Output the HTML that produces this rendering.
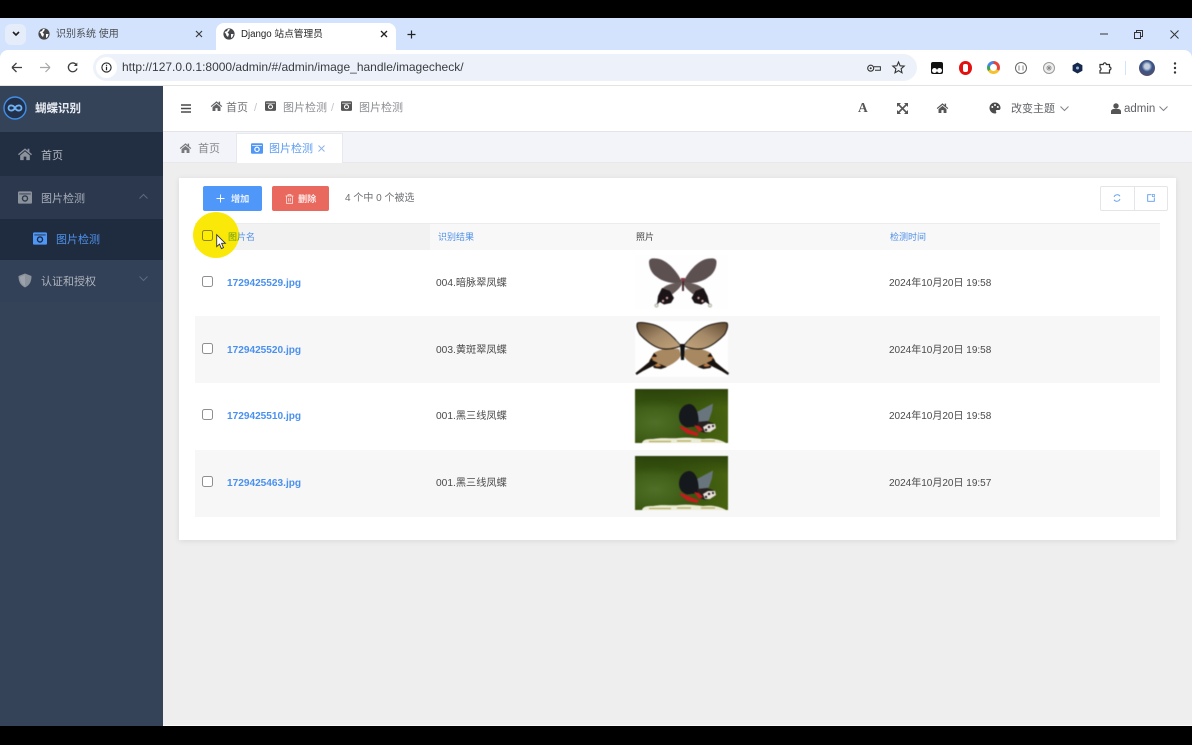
<!DOCTYPE html>
<html lang="zh"><head><meta charset="utf-8"><title>Django 站点管理员</title>
<style>
*{box-sizing:border-box}
html,body{margin:0;padding:0;width:1192px;height:745px;overflow:hidden;background:#000;font-family:"Liberation Sans","Noto Sans CJK SC",sans-serif}
#w{position:absolute;left:0;top:0;width:1192px;height:745px;filter:blur(.3px)}
.a{position:absolute;white-space:nowrap}
svg{position:absolute;display:block;overflow:visible}
.t{line-height:16px;height:16px}
.cb{position:absolute;width:11px;height:11px;border:1px solid #8f8f8f;border-radius:2.5px;background:#fff;left:202px}
.img{filter:blur(.45px)}
.lnk{font-size:10.1px;font-weight:700;color:#4a90ee}
.cell{font-size:10.2px;color:#4a4a4a}
.dt{font-size:10px;color:#4a4a4a}
</style></head><body><div id="w">
<svg width="0" height="0" style="position:absolute"><defs>
<symbol id="home" viewBox="0 0 18 16"><path d="M9 1.5 L1 8.2 L2 9.4 L9 3.6 L16 9.4 L17 8.2 L14 5.7 V2 H12 V4 Z M3.5 9.5 V15 H7.5 V11 H10.5 V15 H14.5 V9.5 L9 5 Z" fill="currentColor"/></symbol>
<symbol id="cam" viewBox="0 0 16 14"><path fill-rule="evenodd" d="M1.5 0 H14.5 A1.5 1.5 0 0 1 16 1.5 V12.5 A1.5 1.5 0 0 1 14.5 14 H1.5 A1.5 1.5 0 0 1 0 12.5 V1.5 A1.5 1.5 0 0 1 1.5 0 Z M1.5 2.4 V3.4 H14.5 V2.4 Z M8 4.4 A3.7 3.7 0 1 0 8 11.8 A3.7 3.7 0 1 0 8 4.4 Z M8 6 A2.1 2.1 0 1 1 8 10.2 A2.1 2.1 0 1 1 8 6 Z" fill="currentColor"/></symbol>
<symbol id="globe" viewBox="0 0 12 12"><circle cx="6" cy="6" r="5.6" fill="currentColor"/><path d="M1.5 4 L4 3 L5 1 L7 1.3 L6 3 L4.5 4.5 L6 6 L5 9 L3.4 7.5 L3 6 Z M8 6 L10.6 6 L9.5 9 L8 10 Z" fill="#fff"/></symbol>
<radialGradient id="pb" cx="22%" cy="62%" r="80%"><stop offset="0" stop-color="#4f7028"/><stop offset=".55" stop-color="#39560f"/><stop offset="1" stop-color="#47620f"/></radialGradient>
<linearGradient id="pt" x1="0" y1="0" x2="0" y2="1"><stop offset="0" stop-color="#22380a" stop-opacity=".7"/><stop offset=".35" stop-color="#22380a" stop-opacity="0"/></linearGradient>
<linearGradient id="fwl" x1="0" y1="0" x2="1" y2="1"><stop offset="0" stop-color="#5e4830"/><stop offset=".5" stop-color="#a58a68"/><stop offset="1" stop-color="#c4a47c"/></linearGradient>
<linearGradient id="fwr" x1="1" y1="0" x2="0" y2="1"><stop offset="0" stop-color="#5e4830"/><stop offset=".5" stop-color="#a58a68"/><stop offset="1" stop-color="#c4a47c"/></linearGradient>
<symbol id="photo" viewBox="0 0 93 54">
<rect width="93" height="54" fill="url(#pb)"/>
<rect width="93" height="54" fill="url(#pt)"/>
<path d="M62 23 L78 14.5 L77 22 L74 31 L70 34 L62 34 Z" fill="#68757d"/>
<path d="M44 28 C44 20 49 15 55 15 C60 16 63 22 63.5 30 L64 37 L52 38.5 C47 37 44 33 44 28 Z" fill="#15181d"/>
<path d="M62 33 L72 32 L78 34 L81 38 L77 42 L70 44 L64 42 Z" fill="#26201f"/>
<path d="M68 38 L73 35 L80 35 L81 39 L75 43 L70 43 Z" fill="#e7dfd8"/>
<circle cx="74" cy="38" r="1.2" fill="#222"/><circle cx="71" cy="41" r="1.2" fill="#222"/><circle cx="78" cy="37" r="1.1" fill="#222"/>
<path d="M44 38 L46 37 L64 44.5 L62 47 L52 44.5 Z M59 36 L64 37 L68 41 L64 43 Z" fill="#c31c1c"/>
<path d="M7 54 C8 50 13 50 18 50 C28 48 36 50 44 49 C52 48 60 49 68 50 C76 49 84 50 91 54 Z" fill="#ecebd6"/>
<path d="M14 52.5 H36 M42 52 H56 M66 52 H80" stroke="#b3ad5e" stroke-width="1.3"/>
</symbol>
</defs></svg>

<!-- tab strip -->
<div class="a" style="left:0;top:18px;width:1192px;height:44px;background:#d3e3fd"></div>
<div class="a" style="left:5px;top:24px;width:21px;height:21px;background:#e5edfb;border-radius:6px"></div>
<svg style="left:12px;top:31px" width="8" height="6"><path d="M1 1 L4 4 L7 1" fill="none" stroke="#1f1f1f" stroke-width="1.6"/></svg>
<svg style="left:38px;top:28px;color:#45474a" width="12" height="12"><use href="#globe"/></svg>
<div class="a t" style="left:56px;top:27px;font-size:10px;color:#4a4c50">识别系统 使用</div>
<svg style="left:195px;top:30px" width="8" height="8"><path d="M1 1 L7 7 M7 1 L1 7" stroke="#3c3c3c" stroke-width="1.2"/></svg>
<div class="a" style="left:216px;top:23px;width:180px;height:27px;background:#fff;border-radius:8px 8px 0 0"></div>
<svg style="left:223px;top:28px;color:#45474a" width="12" height="12"><use href="#globe"/></svg>
<div class="a t" style="left:241px;top:27px;font-size:9.7px;color:#1f1f1f">Django 站点管理员</div>
<svg style="left:380px;top:30px" width="8" height="8"><path d="M1 1 L7 7 M7 1 L1 7" stroke="#222" stroke-width="1.3"/></svg>
<svg style="left:407px;top:30px" width="9" height="9"><path d="M4.5 0.5 V8.5 M0.5 4.5 H8.5" stroke="#222" stroke-width="1.2"/></svg>
<svg style="left:1099px;top:33px" width="10" height="2"><path d="M1 1 H9" stroke="#333" stroke-width="1"/></svg>
<svg style="left:1134px;top:30px" width="9" height="9"><path d="M0.5 2.5 H6.5 V8.5 H0.5 Z M2.5 2.5 V0.5 H8.5 V6.5 H6.5" fill="none" stroke="#333" stroke-width="1"/></svg>
<svg style="left:1170px;top:30px" width="9" height="9"><path d="M0.5 0.5 L8.5 8.5 M8.5 0.5 L0.5 8.5" stroke="#333" stroke-width="1"/></svg>

<!-- toolbar -->
<div class="a" style="left:0;top:50px;width:1192px;height:36px;background:#fff;border-radius:8px 8px 0 0;border-bottom:1px solid #e3e3e3"></div>
<svg style="left:11px;top:62px" width="12" height="11"><path d="M1 5.5 H11 M1 5.5 L5.5 1 M1 5.5 L5.5 10" fill="none" stroke="#3f3f3f" stroke-width="1.3"/></svg>
<svg style="left:39px;top:62px" width="12" height="11"><path d="M1 5.5 H11 M11 5.5 L6.5 1 M11 5.5 L6.5 10" fill="none" stroke="#a5a7aa" stroke-width="1.2"/></svg>
<svg style="left:67px;top:62px" width="11" height="11"><path d="M9.5 3 A4.4 4.4 0 1 0 10 6.5" fill="none" stroke="#3f3f3f" stroke-width="1.3"/><path d="M10.3 0.5 V4 H6.8 Z" fill="#3f3f3f"/></svg>
<div class="a" style="left:93px;top:54px;width:824px;height:27px;background:#edf2fa;border-radius:14px"></div>
<div class="a" style="left:96px;top:57px;width:21px;height:21px;background:#fff;border-radius:50%"></div>
<svg style="left:101px;top:62px" width="11" height="11"><circle cx="5.5" cy="5.5" r="4.6" fill="none" stroke="#222" stroke-width="1.1"/><path d="M5.5 4.8 V8.2 M5.5 2.7 V3.9" stroke="#222" stroke-width="1.2"/></svg>
<div class="a" style="left:122px;top:59px;height:17px;line-height:17px;font-size:12px;color:#3a3c40">http://127.0.0.1:8000/admin/#/admin/image_handle/imagecheck/</div>
<svg style="left:867px;top:64px" width="14" height="9"><circle cx="3.7" cy="4.2" r="3" fill="none" stroke="#333" stroke-width="1.1"/><circle cx="3.7" cy="4.2" r="1" fill="#333"/><path d="M6.8 2.7 H13.4 V6.3 H8" fill="none" stroke="#333" stroke-width="1"/></svg>
<svg style="left:892px;top:61px" width="13" height="13"><path d="M6.5 1 L8.1 4.8 L12.2 5.1 L9.1 7.8 L10 11.8 L6.5 9.7 L3 11.8 L3.9 7.8 L.8 5.1 L4.9 4.8 Z" fill="none" stroke="#333" stroke-width="1.1"/></svg>
<div class="a" style="left:931px;top:62px;width:12px;height:12px;background:#111;border-radius:2px"></div>
<div class="a" style="left:932px;top:68px;width:5px;height:5px;background:#fff;border-radius:50%"></div>
<div class="a" style="left:937px;top:68px;width:5px;height:5px;background:#fff;border-radius:50%"></div>
<div class="a" style="left:959px;top:61px;width:13px;height:14px;background:#e31010;border-radius:50%"></div>
<div class="a" style="left:963px;top:64px;width:5px;height:8px;background:#fff;border-radius:2px"></div>
<div class="a" style="left:987px;top:61px;width:13px;height:13px;border-radius:50%;background:conic-gradient(#e5423a 0 33%,#f6c12e 33% 66%,#3aa757 66% 80%,#4a86e8 80%)"></div>
<div class="a" style="left:990px;top:64px;width:7px;height:7px;border-radius:50%;background:#fff"></div>
<div class="a" style="left:1015px;top:62px;width:12px;height:12px;border-radius:50%;border:1px solid #666"></div>
<svg style="left:1018px;top:65px" width="6" height="6"><path d="M1 .5 V5.5 M5 .5 V5.5" stroke="#666" stroke-width=".8"/></svg>
<div class="a" style="left:1043px;top:62px;width:12px;height:12px;border-radius:50%;border:1px solid #999;background:#eee"></div>
<svg style="left:1046px;top:65px" width="6" height="6"><path d="M3 0 V6 M0 3 H6 M1 1 L5 5 M5 1 L1 5" stroke="#888" stroke-width=".8"/></svg>
<svg style="left:1072px;top:62px" width="11" height="12"><path d="M5.5 0.5 L10.4 3.2 V8.8 L5.5 11.5 L.6 8.8 V3.2 Z" fill="#15284d"/><circle cx="5.5" cy="6" r="1.5" fill="#9fb6d8"/></svg>
<svg style="left:1099px;top:61px" width="13" height="13"><path d="M1 3.5 H4.2 A1.6 1.6 0 0 1 7.4 3.5 H10.5 V6 A1.5 1.5 0 0 1 10.5 9 V12 H1 V9.5 A1.6 1.6 0 0 0 1 6.5 Z" fill="none" stroke="#333" stroke-width="1.2"/></svg>
<div class="a" style="left:1125px;top:61px;width:1px;height:14px;background:#d3e3fd"></div>
<div class="a" style="left:1139px;top:60px;width:16px;height:16px;border-radius:50%;background:radial-gradient(circle at 50% 40%,#c5cede 0 20%,#39558a 42%,#6a4650 100%)"></div>
<svg style="left:1173px;top:62px" width="4" height="12"><circle cx="2" cy="1.5" r="1.2" fill="#333"/><circle cx="2" cy="6" r="1.2" fill="#333"/><circle cx="2" cy="10.5" r="1.2" fill="#333"/></svg>

<!-- page -->
<div class="a" style="left:0;top:86px;width:1192px;height:640px;background:#eeeeee"></div>
<div class="a" style="left:163px;top:725px;width:1029px;height:1px;background:#fafafa"></div>

<!-- sidebar -->
<div class="a" style="left:0;top:86px;width:163px;height:640px;background:#354359"></div>
<div class="a" style="left:0;top:132px;width:163px;height:44px;background:#222e42"></div>
<div class="a" style="left:0;top:176px;width:163px;height:43px;background:#2b384e"></div>
<div class="a" style="left:0;top:219px;width:163px;height:41px;background:#1f2b3f"></div>
<div class="a" style="left:0;top:260px;width:163px;height:42px;background:#324058"></div>
<svg style="left:3px;top:96px" width="24" height="24"><circle cx="12" cy="12" r="11" fill="#22304a" stroke="#3f8fe8" stroke-width="1.4"/><path d="M12 12 C10 8.5 5.5 8.7 5.5 12 C5.5 15.3 10 15.5 12 12 C14 8.5 18.5 8.7 18.5 12 C18.5 15.3 14 15.5 12 12 Z" fill="none" stroke="#6fb3f5" stroke-width="1.8"/></svg>
<div class="a t" style="left:35px;top:101px;font-size:11.5px;font-weight:700;color:#e8ecf2">蝴蝶识别</div>
<svg style="left:17px;top:147px;color:#8b929c" width="16" height="14"><use href="#home"/></svg>
<div class="a t" style="left:41px;top:148px;font-size:11px;color:#b4b9c1">首页</div>
<svg style="left:18px;top:191px;color:#8b929c" width="14" height="13"><use href="#cam"/></svg>
<div class="a t" style="left:41px;top:191px;font-size:11px;color:#aab0ba">图片检测</div>
<svg style="left:139px;top:194px" width="9" height="5"><path d="M.5 4.5 L4.5 .5 L8.5 4.5" fill="none" stroke="#5d6a7e" stroke-width="1"/></svg>
<svg style="left:33px;top:232px;color:#4f97f7" width="14" height="13"><use href="#cam"/></svg>
<div class="a t" style="left:56px;top:232px;font-size:11px;color:#4f93ee">图片检测</div>
<svg style="left:18px;top:273px" width="14" height="15"><path d="M7 .5 L13.5 3 C13.5 8 12 12 7 14.5 C2 12 .5 8 .5 3 Z" fill="#8b929c"/><path d="M7 2 V13 C3.5 11 2 8 2 4 Z" fill="#9ca2ab"/></svg>
<div class="a t" style="left:41px;top:274px;font-size:11px;color:#b0b5bd">认证和授权</div>
<svg style="left:139px;top:276px" width="9" height="5"><path d="M.5 .5 L4.5 4.5 L8.5 .5" fill="none" stroke="#5d6a7e" stroke-width="1"/></svg>

<!-- header -->
<div class="a" style="left:163px;top:86px;width:1029px;height:46px;background:#fff;border-bottom:1px solid #e4e4e4"></div>
<svg style="left:181px;top:104px" width="10" height="9"><path d="M0 1 H10 M0 4.5 H10 M0 8 H10" stroke="#4a4a4a" stroke-width="1.4"/></svg>
<svg style="left:210px;top:100px;color:#606266" width="13" height="12"><use href="#home"/></svg>
<div class="a t" style="left:226px;top:100px;font-size:11px;color:#707276">首页</div>
<div class="a t" style="left:254px;top:100px;font-size:11px;color:#c0c4cc">/</div>
<svg style="left:265px;top:101px;color:#555" width="11" height="10"><use href="#cam"/></svg>
<div class="a t" style="left:283px;top:100px;font-size:11px;color:#8b8d91">图片检测</div>
<div class="a t" style="left:331px;top:100px;font-size:11px;color:#c0c4cc">/</div>
<svg style="left:341px;top:101px;color:#555" width="11" height="10"><use href="#cam"/></svg>
<div class="a t" style="left:359px;top:100px;font-size:11px;color:#8b8d91">图片检测</div>
<div class="a" style="left:858px;top:100px;height:16px;line-height:16px;font-family:'Liberation Serif',serif;font-weight:700;font-size:13.5px;color:#555">A</div>
<svg style="left:897px;top:103px" width="11" height="11"><path d="M1 1 L10 10 M10 1 L1 10" stroke="#555" stroke-width="1.6"/><path d="M0 0 H4 L0 4 Z M11 0 H7 L11 4 Z M0 11 H4 L0 7 Z M11 11 H7 L11 7 Z" fill="#555"/></svg>
<svg style="left:936px;top:102px;color:#555" width="13" height="12"><use href="#home"/></svg>
<svg style="left:989px;top:102px" width="12" height="12"><path d="M6 .5 A5.5 5.5 0 1 0 6 11.5 C7.5 11.5 7.6 10.4 7 9.6 C6.5 8.8 7 8 8 8 H9.8 C11 8 11.5 7 11.5 6 A5.5 5.5 0 0 0 6 .5 Z" fill="#4c4c4c"/><circle cx="3.3" cy="5" r="1" fill="#fff"/><circle cx="6" cy="3" r="1" fill="#fff"/><circle cx="8.8" cy="5" r="1" fill="#fff"/></svg>
<div class="a t" style="left:1011px;top:101px;font-size:11px;color:#606266">改变主题</div>
<svg style="left:1060px;top:106px" width="9" height="5"><path d="M.5 .5 L4.5 4.5 L8.5 .5" fill="none" stroke="#808388" stroke-width="1"/></svg>
<svg style="left:1111px;top:103px" width="10" height="11"><circle cx="5" cy="3" r="2.7" fill="#555"/><path d="M0 11 V8.5 C0 6.8 1.5 6 3 6 H7 C8.5 6 10 6.8 10 8.5 V11 Z" fill="#555"/></svg>
<div class="a t" style="left:1124px;top:101px;font-size:11.5px;color:#606266">admin</div>
<svg style="left:1159px;top:106px" width="9" height="5"><path d="M.5 .5 L4.5 4.5 L8.5 .5" fill="none" stroke="#808388" stroke-width="1"/></svg>

<!-- tabs -->
<div class="a" style="left:163px;top:132px;width:1029px;height:31px;background:#f2f4f9;border-bottom:1px solid #e8e8e8"></div>
<svg style="left:179px;top:142px;color:#77797d" width="13" height="12"><use href="#home"/></svg>
<div class="a t" style="left:198px;top:141px;font-size:11px;color:#85878b">首页</div>
<div class="a" style="left:236px;top:133px;width:107px;height:30px;background:#fff;border:1px solid #e7e9ef;border-bottom:0"></div>
<svg style="left:251px;top:143px;color:#4f97f7" width="12" height="11"><use href="#cam"/></svg>
<div class="a t" style="left:269px;top:141px;font-size:11px;color:#5b9cf0">图片检测</div>
<svg style="left:318px;top:145px" width="7" height="7"><path d="M.5 .5 L6.5 6.5 M6.5 .5 L.5 6.5" stroke="#8fb3e6" stroke-width="1"/></svg>

<!-- card -->
<div class="a" style="left:179px;top:178px;width:997px;height:362px;background:#fff;box-shadow:0 1px 6px rgba(0,0,0,.09)"></div>
<div class="a" style="left:203px;top:186px;width:59px;height:25px;background:#4f97f9;border-radius:2px"></div>
<svg style="left:216px;top:194px" width="9" height="9"><path d="M4.5 .5 V8.5 M.5 4.5 H8.5" stroke="#fff" stroke-width="1"/></svg>
<div class="a t" style="left:231px;top:191px;font-size:9.2px;font-weight:700;color:#e8f1fe">增加</div>
<div class="a" style="left:272px;top:186px;width:57px;height:25px;background:#e9695f;border-radius:2px"></div>
<svg style="left:285px;top:194px" width="9" height="10"><path d="M.5 2 H8.5 M3 2 V.7 H6 V2 M1.5 2 V9.3 H7.5 V2 M3.7 4 V7.5 M5.3 4 V7.5" fill="none" stroke="#fde7e5" stroke-width=".8"/></svg>
<div class="a t" style="left:298px;top:191px;font-size:9.2px;font-weight:700;color:#fde7e5">删除</div>
<div class="a t" style="left:345px;top:191px;font-size:10px;color:#6d6f73">4 个中 0 个被选</div>
<div class="a" style="left:1100px;top:186px;width:68px;height:25px;border:1px solid #e3e5e9;border-radius:2px"></div>
<div class="a" style="left:1134px;top:186px;width:1px;height:25px;background:#e3e5e9"></div>
<svg style="left:1113px;top:194px" width="8" height="8"><path d="M7 2.2 A3.4 3.4 0 0 0 1 3 M1 5.8 A3.4 3.4 0 0 0 7 5" fill="none" stroke="#5b9cf0" stroke-width=".9"/></svg>
<svg style="left:1147px;top:194px" width="8" height="8"><path d="M4.5 .7 H.7 V7.3 H7.3 V3.5" fill="none" stroke="#5b9cf0" stroke-width=".9"/><rect x="5.3" y=".5" width="2.2" height="2" fill="none" stroke="#5b9cf0" stroke-width=".7"/></svg>

<!-- table header -->
<div class="a" style="left:195px;top:223px;width:965px;height:27px;background:#f8f8f8;border-top:1px solid #ececec"></div>
<div class="a" style="left:195px;top:224px;width:235px;height:26px;background:#f2f2f2"></div>
<div class="a t" style="left:228px;top:229px;font-size:9px;color:#4f8fe8">图片名</div>
<div class="a t" style="left:438px;top:229px;font-size:9px;color:#4f8fe8">识别结果</div>
<div class="a t" style="left:636px;top:229px;font-size:9px;color:#444">照片</div>
<div class="a t" style="left:890px;top:229px;font-size:9px;color:#4f8fe8">检测时间</div>

<!-- rows -->
<div class="a" style="left:195px;top:316px;width:965px;height:67px;background:#f7f7f7"></div>
<div class="a" style="left:195px;top:450px;width:965px;height:67px;background:#f7f7f7"></div>

<div class="cb" style="top:276px"></div>
<div class="a t lnk" style="left:227px;top:276px">1729425529.jpg</div>
<div class="a t cell" style="left:436px;top:276px">004.暗脉翠凤蝶</div>
<div class="a t dt" style="left:889px;top:276px">2024年10月20日 19:58</div>

<div class="cb" style="top:343px"></div>
<div class="a t lnk" style="left:227px;top:343px">1729425520.jpg</div>
<div class="a t cell" style="left:436px;top:343px">003.黄斑翠凤蝶</div>
<div class="a t dt" style="left:889px;top:343px">2024年10月20日 19:58</div>

<div class="cb" style="top:409px"></div>
<div class="a t lnk" style="left:227px;top:409px">1729425510.jpg</div>
<div class="a t cell" style="left:436px;top:409px">001.黑三线凤蝶</div>
<div class="a t dt" style="left:889px;top:409px">2024年10月20日 19:58</div>

<div class="cb" style="top:476px"></div>
<div class="a t lnk" style="left:227px;top:476px">1729425463.jpg</div>
<div class="a t cell" style="left:436px;top:476px">001.黑三线凤蝶</div>
<div class="a t dt" style="left:889px;top:476px">2024年10月20日 19:57</div>

<!-- butterflies -->
<svg class="img" style="left:635px;top:255px" width="93" height="54" viewBox="0 0 93 54">
<rect width="93" height="54" fill="#fefefe"/>
<path d="M47 27 C43 18 35 8 26 4.5 C20 3 14 2.5 14 7 C14 13 17 19 22 22 C28 27 38 29 47 28 Z" fill="#5c5051"/>
<path d="M48.5 27 C52.5 18 60.5 8 69.5 4.5 C75.5 3 81.5 2.5 81.5 7 C81.5 13 78.5 19 73.5 22 C67.5 27 57.5 29 48.5 28 Z" fill="#5c5051"/>
<path d="M46 27 C38 28 30 30 27 34 L33 42 C40 38 45 33 47 29 Z M49.5 27 C57.5 28 65.5 30 68.5 34 L62.5 42 C55.5 38 50.5 33 48.5 29 Z" fill="#665a58"/>
<path d="M47 23 H49 V36 H47 Z" fill="#4a2a32"/><path d="M46 23 H50 V26 H46 Z" fill="#8a3a48"/>
<path d="M27 33 L35 36 L39 43 L36 48 L29 49.5 L25 47 L22 49.5 L23 41 Z" fill="#1b1416"/>
<path d="M68.5 33 L60.5 36 L56.5 43 L59.5 48 L66.5 49.5 L70.5 47 L74.5 49.5 L72.5 41 Z" fill="#1b1416"/>
<circle cx="32" cy="43" r="1.2" fill="#d8a6aa"/><circle cx="28" cy="46" r="1.2" fill="#d8a6aa"/><circle cx="63.5" cy="43" r="1.2" fill="#d8a6aa"/><circle cx="67.5" cy="46" r="1.2" fill="#d8a6aa"/>
<circle cx="21.5" cy="50.5" r="1.7" fill="#e4e0d2" stroke="#6a6a60" stroke-width=".4"/><circle cx="75" cy="50.5" r="1.7" fill="#e4e0d2" stroke="#6a6a60" stroke-width=".4"/>
</svg>
<svg class="img" style="left:635px;top:321px" width="93" height="56" viewBox="0 0 93 56">
<rect width="93" height="56" fill="#fefefe"/>
<path d="M44 28 C34 27 25 28 19 32 L14 40 L18 44 L31 46 C38 43 44 39 46 34 Z" fill="#a88860"/>
<path d="M50.5 28 C60.5 27 69.5 28 75.5 32 L80.5 40 L76.5 44 L63.5 46 C56.5 43 50.5 39 48.5 34 Z" fill="#a88860"/>
<path d="M46 25 C38 15 28 6 18 3.5 C12 2 5 1 2.5 2 C1 5 3 10 5 13.5 C10 19 18 25 24 27 C30 29 38 28 46 25 Z" fill="url(#fwl)" stroke="#1d1712" stroke-width="1.1"/>
<path d="M48.5 25 C56.5 15 66.5 6 76.5 3.5 C82.5 2 89.5 1 92 2 C93.5 5 91.5 10 89.5 13.5 C84.5 19 76.5 25 70.5 27 C64.5 29 56.5 28 48.5 25 Z" fill="url(#fwr)" stroke="#1d1712" stroke-width="1.1"/>
<path d="M45 23 H50 L49 39 H46 Z" fill="#111"/>
<path d="M19 32 L22 35 L17 39 L23 42 L18 45 L8 50 L1.5 54 L0.5 52 L8 46 L14 41 Z" fill="#17110d"/>
<path d="M18 45 L25 43 L32 46 L26 48 L19 47 Z" fill="#1f1812"/>
<path d="M75.5 32 L72.5 35 L77.5 39 L71.5 42 L76.5 45 L86.5 50 L93 54 L94 52 L86.5 46 L80.5 41 Z" fill="#17110d"/>
<path d="M76.5 45 L69.5 43 L62.5 46 L68.5 48 L75.5 47 Z" fill="#1f1812"/>
<ellipse cx="19" cy="37" rx="2.5" ry="1.2" fill="#c07a40"/><ellipse cx="23" cy="44.5" rx="3" ry="1.2" fill="#c07a40"/><ellipse cx="75.5" cy="37" rx="2.5" ry="1.2" fill="#c07a40"/><ellipse cx="71.5" cy="44.5" rx="3" ry="1.2" fill="#c07a40"/>
<path d="M45 24 L41 19 M50 24 L54 19" stroke="#9a9a98" stroke-width=".5"/>
</svg>
<svg class="img" style="left:635px;top:389px" width="93" height="54"><use href="#photo"/></svg>
<svg class="img" style="left:635px;top:456px" width="93" height="54"><use href="#photo"/></svg>

<!-- highlight + cursor -->
<div class="a" style="left:193px;top:212px;width:46px;height:46px;border-radius:50%;background:rgba(250,232,0,.97)"></div>
<div class="a" style="left:202px;top:230px;width:11px;height:11px;border:1px solid #8c8418;border-radius:2.5px;background:rgba(255,240,0,.6)"></div>
<div class="a t" style="left:228px;top:229px;font-size:9px;color:#6a9a12;width:11px;overflow:hidden">图片名</div>
<svg style="left:216px;top:234px" width="11" height="16"><path d="M.7 .7 V12.6 L3.5 10.1 L5.4 14.6 L7.5 13.7 L5.6 9.3 H9.4 Z" fill="#fff" stroke="#333" stroke-width=".9"/></svg>

<div class="a" style="left:0;top:726px;width:1192px;height:19px;background:#000"></div>
</div></body></html>
